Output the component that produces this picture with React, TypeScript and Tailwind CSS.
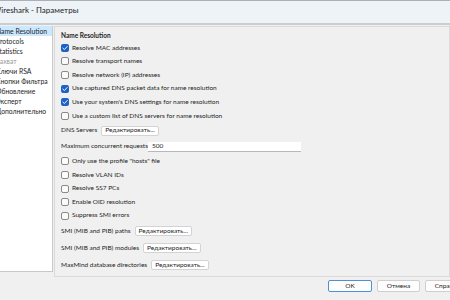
import React from "react";

const font = { fontFamily: 'Lato, "Noto Sans", sans-serif' };

const treeItems = [
    { label: "Name Resolution", selected: true },
    { label: "Protocols" },
    { label: "Statistics" },
    { label: "Захват", disabled: true },
    { label: "Ключи RSA" },
    { label: "Кнопки Фильтра" },
    { label: "Обновление" },
    { label: "Эксперт" },
    { label: "Дополнительно" },
];

const Check = ({ checked, label }: { checked?: boolean; label: string }) => (
    <div className="flex items-center h-[13.6px]">
        {checked ? (
            <span className="w-[8px] h-[8px] rounded-[2px] bg-[#1d63c4] flex items-center justify-center">
                <svg width="6" height="6" viewBox="0 0 10 10" fill="none">
                    <path d="M1.5 5.2 L4 7.6 L8.6 2.6" stroke="white" strokeWidth="1.6" strokeLinecap="round" strokeLinejoin="round" />
                </svg>
            </span>
        ) : (
            <span className="w-[8px] h-[8px] rounded-[2px] border border-[#8a8a8a] bg-[#fbfbfb]" />
        )}
        <span className="ml-[3px]">{label}</span>
    </div>
);

const EditButton = () => (
    <span className="ml-[4px] h-[10px] px-[3px] flex items-center bg-white border border-[#d3d3d3] rounded-[2px] leading-none">
        Редактировать...
    </span>
);

const LabelRow = ({ label }: { label: string }) => (
    <div className="flex items-center h-[17px]">
        <span>{label}</span>
        <EditButton />
    </div>
);

export default function App() {
    return (
        <div className="w-[450px] h-[300px] overflow-hidden bg-[#f0f0f0] text-[#1e1e1e] text-[6.5px] leading-none flex flex-col" style={font}>
            {/* title bar */}
            <div className="h-[25px] shrink-0 bg-[#eef3f8] border-t border-[#aab0b8] border-b-2 border-b-[#cdcdcd] flex items-center overflow-hidden">
                <span className="ml-[-7px] mt-[-4px] text-[8px] text-[#222]">Wireshark - Параметры</span>
            </div>

            <div className="flex h-[252px] shrink-0 pt-[1px]">
                {/* left tree */}
                <div className="w-[53px] h-[246px] bg-white border-r border-b border-[#c8c8c8] overflow-hidden text-[6.8px]">
                    {treeItems.map((item) => (
                        <div
                            key={item.label}
                            className={`h-[10px] flex items-center whitespace-nowrap ${item.selected ? "bg-[#cce8ff]" : ""}`}
                        >
                            <span className={`ml-[-4px] ${item.disabled ? "text-[#9a9a9a]" : ""}`}>{item.label}</span>
                        </div>
                    ))}
                </div>

                {/* right group */}
                <div className="ml-[1px] flex-1 border border-[#dadada] pt-[4px] pl-[6px] whitespace-nowrap">
                    <div className="h-[10px] flex items-center font-bold">Name Resolution</div>
                    <Check checked label="Resolve MAC addresses" />
                    <Check label="Resolve transport names" />
                    <Check label="Resolve network (IP) addresses" />
                    <Check checked label="Use captured DNS packet data for name resolution" />
                    <Check checked label="Use your system's DNS settings for name resolution" />
                    <Check label="Use a custom list of DNS servers for name resolution" />
                    <div className="flex items-center h-[16px]">
                        <span>DNS Servers</span>
                        <EditButton />
                    </div>
                    <div className="flex items-center h-[16px]">
                        <span className="w-[85px]">Maximum concurrent requests</span>
                        <span className="ml-[2px] w-[153px] h-[10px] bg-white border-b border-[#b8b8b8] flex items-center pl-[4px]">500</span>
                    </div>
                    <Check label={'Only use the profile "hosts" file'} />
                    <Check label="Resolve VLAN IDs" />
                    <Check label="Resolve SS7 PCs" />
                    <Check label="Enable OID resolution" />
                    <Check label="Suppress SMI errors" />
                    <LabelRow label="SMI (MIB and PIB) paths" />
                    <LabelRow label="SMI (MIB and PIB) modules" />
                    <LabelRow label="MaxMind database directories" />
                </div>
            </div>

            {/* footer */}
            <div className="flex-1 flex items-start pt-[3px] pl-[328px] gap-[5px] whitespace-nowrap">
                <span className="w-[44px] h-[12px] shrink-0 flex items-center justify-center bg-[#fdfdfd] border border-[#4f8fd6] rounded-[2px]">OK</span>
                <span className="w-[43px] h-[12px] shrink-0 flex items-center justify-center bg-[#fdfdfd] border border-[#cfcfcf] rounded-[2px]">Отмена</span>
                <span className="w-[44px] h-[12px] shrink-0 flex items-center justify-center bg-[#fdfdfd] border border-[#cfcfcf] rounded-[2px]">Справка</span>
            </div>
        </div>
    );
}
